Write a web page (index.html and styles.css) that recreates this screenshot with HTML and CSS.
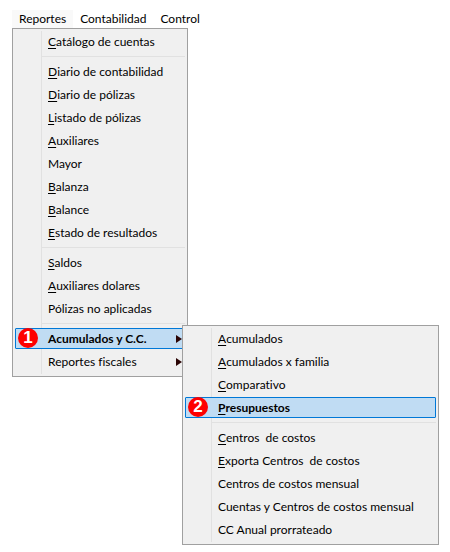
FILE: index.html
```html
<!DOCTYPE html>
<html lang="es">
<head>
    <meta charset="UTF-8">
    <meta name="viewport" content="width=device-width, initial-scale=1.0">
    <title>Reportes</title>
    <link rel="stylesheet" href="styles.css">
</head>
<body>
    <nav class="menu-bar">
        <button class="menu-title open">Reportes</button>
        <button class="menu-title">Contabilidad</button>
        <button class="menu-title">Control</button>
    </nav>

    <ul class="menu">
        <li><button class="menu-item"><u>C</u>atálogo de cuentas</button></li>
        <li class="separator"></li>
        <li><button class="menu-item"><u>D</u>iario de contabilidad</button></li>
        <li><button class="menu-item"><u>D</u>iario de pólizas</button></li>
        <li><button class="menu-item"><u>L</u>istado de pólizas</button></li>
        <li><button class="menu-item"><u>A</u>uxiliares</button></li>
        <li><button class="menu-item">Mayor</button></li>
        <li><button class="menu-item"><u>B</u>alanza</button></li>
        <li><button class="menu-item"><u>B</u>alance</button></li>
        <li><button class="menu-item"><u>E</u>stado de resultados</button></li>
        <li class="separator"></li>
        <li><button class="menu-item"><u>S</u>aldos</button></li>
        <li><button class="menu-item"><u>A</u>uxiliares dolares</button></li>
        <li><button class="menu-item">Pólizas no aplicadas</button></li>
        <li class="separator"></li>
        <li class="has-submenu">
            <button class="menu-item selected">
                <span class="badge">1</span>
                Acumulados y C.C.
                <svg class="arrow" viewBox="0 0 6 8"><path d="M0 0L6 4L0 8Z"/></svg>
            </button>

            <!-- Submenu -->
            <ul class="menu submenu">
                <li><button class="menu-item"><u>A</u>cumulados</button></li>
                <li><button class="menu-item"><u>A</u>cumulados x familia</button></li>
                <li><button class="menu-item"><u>C</u>omparativo</button></li>
                <li><button class="menu-item selected"><span class="badge">2</span><u>P</u>resupuestos</button></li>
                <li class="separator"></li>
                <li><button class="menu-item"><u>C</u>entros&nbsp; de costos</button></li>
                <li><button class="menu-item"><u>E</u>xporta Centros&nbsp; de costos</button></li>
                <li><button class="menu-item">Centros de costos mensual</button></li>
                <li><button class="menu-item">Cuentas y Centros de costos mensual</button></li>
                <li><button class="menu-item">CC Anual prorrateado</button></li>
            </ul>
        </li>
        <li>
            <button class="menu-item">
                Reportes fiscales
                <svg class="arrow" viewBox="0 0 6 8"><path d="M0 0L6 4L0 8Z"/></svg>
            </button>
        </li>
    </ul>
</body>
</html>
```

FILE: styles.css
```css
* {
    box-sizing: border-box;
}

body {
    min-height: 100vh;
    margin: 0;
    padding: 10px 12px;
    background: #fff;
    font-family: Lato, "Open Sans", sans-serif;
    font-size: 12px;
    font-variant-ligatures: none;
    color: #000;
}

button {
    font: inherit;
    font-variant-ligatures: none;
    color: inherit;
    background: none;
    border: none;
    cursor: default;
}

.menu-bar {
    display: flex;
}

.menu-title {
    height: 18px;
    padding: 0 7px;
    line-height: 18px;
}

.menu-title.open {
    background: #f9f9f9;
}

.menu {
    width: max-content;
    min-width: 176px;
    margin: 0;
    padding: 2px;
    list-style: none;
    border: 1px solid #a0a0a0;
    /* vertical line between the icon column and the labels */
    background: linear-gradient(#e1e1e1, #e1e1e1) 26px 2px / 1px calc(100% - 4px) no-repeat #f0f0f0;
    background-position-x: 28px;
}

.menu-item {
    display: flex;
    align-items: center;
    position: relative;
    width: 100%;
    height: 21px;
    margin-bottom: 2px;
    padding: 0 2px 0 32px;
    border: 1px solid transparent;
    border-radius: 1px;
    line-height: 18px;
    text-align: left;
    white-space: nowrap;
}

.menu-item u {
    text-underline-offset: 2px;
}

.menu-item.selected {
    background: #c0dcf3;
    border-color: #0078d7;
    font-weight: bold;
}

.separator {
    height: 7px;
    margin-left: 26px;
    padding-top: 2px;
}

.separator::before {
    content: "";
    display: block;
    height: 1px;
    background: #e1e1e1;
}

.has-submenu {
    position: relative;
}

.submenu {
    position: absolute;
    top: -3px;
    left: calc(100% - 3px);
    z-index: 1;
    min-width: 257px;
}

.arrow {
    width: 6px;
    height: 8px;
    margin-left: auto;
    fill: #2b0505;
}

.badge {
    position: absolute;
    top: -1px;
    left: 2px;
    width: 20px;
    height: 20px;
    border-radius: 50%;
    background: #fe0000;
    color: #fff;
    font: bold 17px/20px "Liberation Sans", Arial, sans-serif;
    text-align: center;
}
```
